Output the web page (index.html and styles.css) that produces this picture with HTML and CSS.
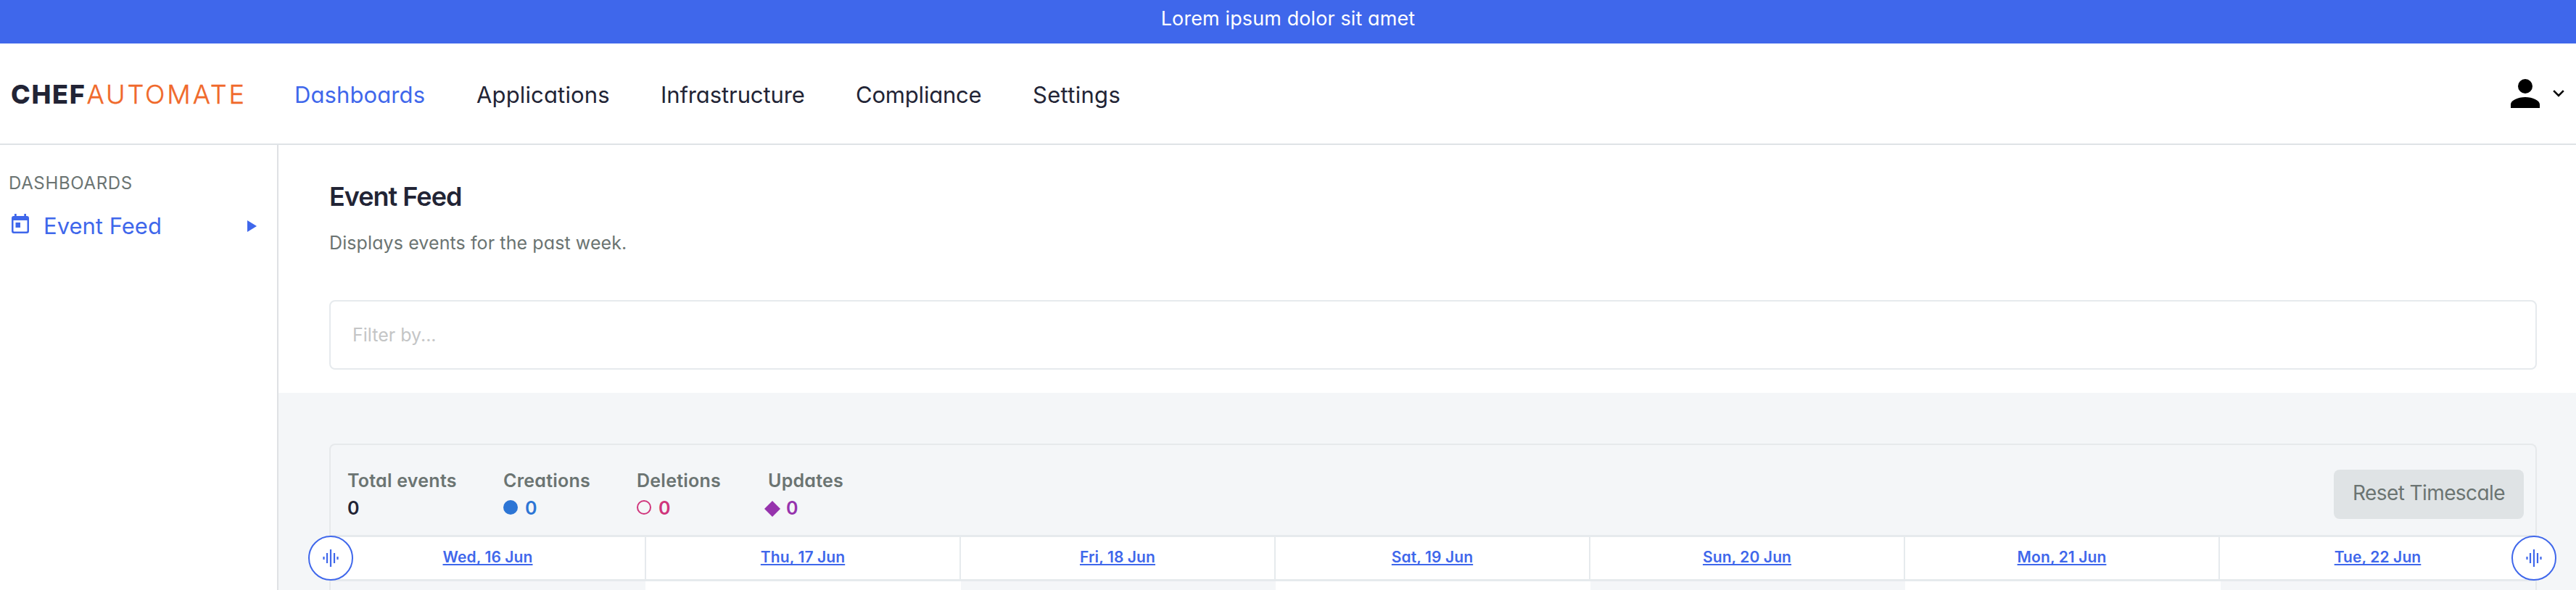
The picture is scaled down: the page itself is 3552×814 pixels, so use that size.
FILE: index.html
```html
<!DOCTYPE html>
<html lang="en">
<head>
<meta charset="utf-8">
<title>Chef Automate</title>
<link rel="stylesheet" href="styles.css">
</head>
<body>
<div class="banner"><span>Lorem ipsum dolor sit amet</span></div>
<header class="header">
  <div class="logo"><span class="logo-chef">CHEF</span><span class="logo-auto">AUTOMATE</span></div>
  <nav class="nav">
    <a class="active">Dashboards</a><a class="n2">Applications</a><a class="n3">Infrastructure</a><a class="n4">Compliance</a><a class="n5">Settings</a>
  </nav>
  <div class="profile">
    <svg width="60" height="60" viewBox="0 0 24 24"><path d="M12 12a4 4 0 1 0 0-8 4 4 0 0 0 0 8zm0 2c-4 0-8 1.800-8 4v2h16v-2c0-2.200-4-4-8-4z"/></svg>
    <svg class="chevron" width="16" height="10" viewBox="0 0 16 10"><path d="M1.200 1.200 8 8l6.800-6.800" fill="none" stroke="#000" stroke-width="2.600"/></svg>
  </div>
</header>
<div class="body">
  <aside class="sidebar">
    <h2>DASHBOARDS</h2>
    <a class="side-link">
      <svg class="calendar" width="24" height="27" viewBox="0 0 24 27"><path fill="#3f67eb" fill-rule="evenodd" d="M4 0h2.700v3h10.600V0H20v3h1a3 3 0 0 1 3 3v18a3 3 0 0 1-3 3H3a3 3 0 0 1-3-3V6a3 3 0 0 1 3-3h1zM2.500 9v14.500a1 1 0 0 0 1 1h17a1 1 0 0 0 1-1V9zM5.500 12H12v7H5.500z"/></svg>
      <span>Event Feed</span>
      <svg class="tri" width="13" height="16" viewBox="0 0 13 16"><path fill="#3f67eb" d="M0 0l13 8-13 8z"/></svg>
    </a>
  </aside>
  <main class="main">
    <section class="intro">
      <h1>Event Feed</h1>
      <p>Displays events for the past week.</p>
      <div class="filter"><span>Filter by...</span></div>
    </section>
    <section class="feed">
      <div class="panel">
        <div class="summary">
          <dl class="total"><dt>Total events</dt><dd>0</dd></dl>
          <dl class="creations"><dt>Creations</dt><dd><svg width="20" height="20"><circle cx="10" cy="10" r="10" fill="#2c75d5"/></svg>0</dd></dl>
          <dl class="deletions"><dt>Deletions</dt><dd><svg width="20" height="20"><circle cx="10" cy="10" r="9" fill="none" stroke="#d0357c" stroke-width="2"/></svg>0</dd></dl>
          <dl class="updates"><dt>Updates</dt><dd><svg width="22" height="22"><path d="M11 0l11 11-11 11L0 11z" fill="#9633ad"/></svg>0</dd></dl>
          <button class="reset">Reset Timescale</button>
        </div>
        <div class="timeline">
          <a>Wed, 16 Jun</a><a>Thu, 17 Jun</a><a>Fri, 18 Jun</a><a>Sat, 19 Jun</a><a>Sun, 20 Jun</a><a>Mon, 21 Jun</a><a>Tue, 22 Jun</a>
          <svg class="handle start" width="62" height="62" viewBox="0 0 62 62"><circle cx="31" cy="31" r="30" fill="#fff" stroke="#3f67eb" stroke-width="2"/><path d="M21.500 29v4M26 24v14M31 19v24M36 24v14M40.500 29v4" stroke="#3f67eb" stroke-width="2.200"/></svg>
          <svg class="handle end" width="62" height="62" viewBox="0 0 62 62"><circle cx="31" cy="31" r="30" fill="#fff" stroke="#3f67eb" stroke-width="2"/><path d="M21.500 29v4M26 24v14M31 19v24M36 24v14M40.500 29v4" stroke="#3f67eb" stroke-width="2.200"/></svg>
        </div>
        <div class="lanes"><i></i><i></i><i></i><i></i><i></i><i></i><i></i></div>
      </div>
    </section>
  </main>
</div>
</body>
</html>
```
FILE: styles.css
```css
* { box-sizing: border-box; margin: 0; padding: 0; }
body {
  width: 3552px; height: 814px; overflow: hidden; background: #fff; color: #222435;
  font-family: Inter, "Open Sans", sans-serif; font-feature-settings: "cv11"; white-space: nowrap;
  display: flex; flex-direction: column;
}
svg { display: block; flex: none; }
.banner { flex: none; height: 60px; padding-bottom: 8px; background: #3f67eb; color: #fff; font-size: 27px; line-height: 52px; letter-spacing: .1px; text-align: center; }
.header { flex: none; height: 140px; border-bottom: 2px solid #dfe3e6; display: flex; align-items: center; padding: 0 16px 0 15px; }
.logo { width: 391px; font-size: 36px; padding-top: 2px; }
.logo-chef { font-weight: 800; letter-spacing: 1.7px; }
.logo-auto { color: #f0692a; font-weight: 300; letter-spacing: 2.9px; margin-left: 1px; -webkit-text-stroke: .4px #f0692a; }
.nav { display: flex; gap: 71px; font-size: 31px; padding-top: 2px; }
.nav .active { color: #3f67eb; width: 180px; letter-spacing: .1px; }
.n2 { width: 183px; letter-spacing: .15px; }
.n3 { width: 198px; letter-spacing: -.1px; }
.n4 { width: 173px; letter-spacing: -.2px; }
.n5 { letter-spacing: .3px; }
.profile { margin-left: auto; display: flex; align-items: center; gap: 8px; }
.body { flex: 1; display: flex; min-height: 0; }
.sidebar { width: 384px; border-right: 2px solid #dfe1e4; padding: 38px 28px 0 12px; }
.sidebar h2 { font-size: 24px; line-height: 30px; font-weight: 400; letter-spacing: .65px; color: #6b7472; }
.side-link { display: flex; align-items: center; height: 40px; margin: 23px 0 0 4px; color: #3f67eb; font-size: 31px; }
.side-link span { margin-left: 20px; }
.calendar { margin-bottom: 5px; }
.tri { margin: 2px 0 0 auto; }
.main { flex: 1; display: flex; flex-direction: column; }
.intro { height: 342px; padding: 46px 54px 0 70px; }
.intro h1 { font-size: 36px; line-height: 50px; font-weight: 600; letter-spacing: -1px; }
.intro p { font-size: 25px; line-height: 34px; letter-spacing: .1px; margin-top: 22px; color: #6b7472; }
.filter { height: 96px; margin-top: 62px; border: 2px solid #e6eaed; border-radius: 8px; padding: 0 30px; color: #c4c5c6; font-size: 25px; line-height: 93px; }
.feed { flex: 1; background: #f4f6f8; padding: 70px 54px 0 70px; min-height: 0; }
.panel { border: 2px solid #e6e9eb; border-bottom: 0; border-radius: 8px 8px 0 0; height: 202px; }
.summary { height: 124px; display: flex; padding: 34px 16px 0 23px; font-weight: 600; font-size: 25px; letter-spacing: .25px; }
.summary dt { color: #6b7472; line-height: 30px; }
.summary dd { display: flex; align-items: center; line-height: 30px; margin-top: 8px; }
.summary dd svg { margin: -2px 10px 0 0; }
.total { width: 215px; }
.creations { width: 184px; }
.creations dd { color: #2c75d5; }
.deletions { width: 181px; }
.deletions dd { color: #d0357c; }
.updates dd { color: #9633ad; margin-left: -5px; }
.summary .updates svg { margin: 2px 8px 0 0; }
.reset { margin-left: auto; width: 262px; height: 68px; padding-bottom: 4px; border: 0; border-radius: 8px; background: #dfe3e5; color: #6b7472; font: inherit; font-weight: 400; font-size: 28px; letter-spacing: -.6px; font-feature-settings: inherit; }
.timeline { position: relative; height: 64px; display: grid; grid-template-columns: 435px repeat(5, 434px) 1fr; background: #fff; border: solid #e6eaed; border-width: 3px 0; }
.timeline a { border-right: 2px solid #e6eaed; text-align: center; color: #3f67eb; font-size: 21px; font-weight: 600; letter-spacing: .1px; line-height: 55px; text-decoration: underline; text-decoration-thickness: 2px; text-underline-offset: 2px; text-decoration-skip-ink: none; }
.timeline a:nth-of-type(7) { border: 0; }
.handle { position: absolute; top: -2px; }
.start { left: -31px; }
.end { right: -29px; }
.lanes { height: 12px; display: grid; grid-template-columns: repeat(7, 1fr); }
.lanes i:nth-child(even) { background: #fff; }
```
